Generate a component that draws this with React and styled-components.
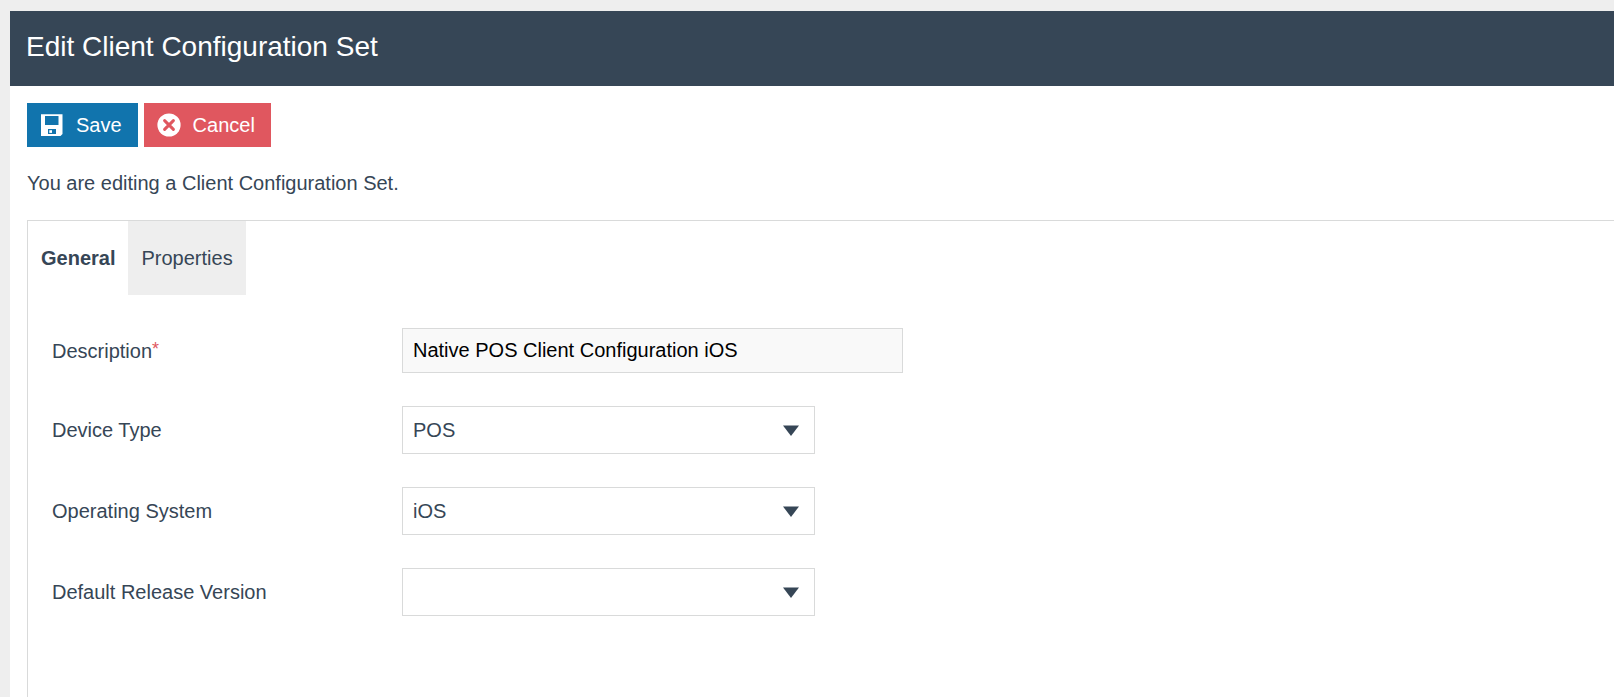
import React, { useState } from 'react';
import styled, { createGlobalStyle } from 'styled-components';

const GlobalStyle = createGlobalStyle`
  * {
    box-sizing: border-box;
  }
  body {
    margin: 0;
    background: #eeeeee;
    color: #364656;
    font-family: "Liberation Sans", Arial, sans-serif;
    font-size: 20px;
    line-height: 24px;
  }
`;

const Page = styled.div`
  display: flex;
  min-height: 100vh;
  padding: 11px 0 0 10px;
`;

const Content = styled.main`
  flex: 1;
  display: flex;
  flex-direction: column;
  background: #ffffff;
`;

const Header = styled.header`
  padding: 20px 16px 23px;
  background: #364656;
`;

const Title = styled.h1`
  margin: 0;
  color: #ffffff;
  font-size: 28px;
  font-weight: normal;
  line-height: 32px;
`;

const Body = styled.form`
  flex: 1;
  display: flex;
  flex-direction: column;
  padding: 17px 0 0 17px;
`;

const Toolbar = styled.div`
  display: flex;
  gap: 6px;
`;

const Button = styled.button`
  display: flex;
  align-items: center;
  gap: 12px;
  height: 44px;
  padding: 0 16px 0 13px;
  border: 0;
  background: ${({ $danger }) => ($danger ? '#e0575f' : '#1174ad')};
  color: #ffffff;
  font: inherit;
  cursor: pointer;
`;

const Intro = styled.p`
  margin: 24px 0 25px;
`;

const TabPanel = styled.section`
  flex: 1;
  border: solid #d9dada;
  border-width: 1px 0 0 1px;
`;

const TabList = styled.div`
  display: flex;
`;

const Tab = styled.button`
  height: 74px;
  padding: 0 13px;
  border: 0;
  background: ${({ $active }) => ($active ? '#ffffff' : '#eeeeee')};
  color: inherit;
  font: inherit;
  font-weight: ${({ $active }) => ($active ? 'bold' : 'normal')};
  cursor: pointer;
`;

const Fields = styled.div`
  display: flex;
  flex-direction: column;
  gap: 33px;
  padding: 33px 24px;
`;

const Row = styled.div`
  display: grid;
  grid-template-columns: 350px 1fr;
  align-items: center;
`;

const Required = styled.span`
  color: #e0575f;
  font-size: 18px;
  line-height: 0;
  vertical-align: 3px;
`;

const Input = styled.input`
  width: 100%;
  max-width: 501px;
  height: 45px;
  padding: 0 10px;
  border: 1px solid #d9dada;
  border-radius: 0;
  background: #f9f9f9;
  color: #000000;
  font: inherit;
`;

const SelectWrap = styled.div`
  position: relative;
  max-width: 413px;
`;

const Select = styled.select`
  display: block;
  width: 100%;
  height: 48px;
  padding: 0 40px 0 10px;
  border: 1px solid #d9dada;
  border-radius: 0;
  appearance: none;
  background: #ffffff;
  color: inherit;
  font: inherit;
`;

const Arrow = styled.svg`
  position: absolute;
  top: 19px;
  right: 16px;
  pointer-events: none;
`;

const SaveIcon = () => (
  <svg width="24" height="24" viewBox="0 0 24 24" aria-hidden="true">
    <path
      fill="#ffffff"
      fillRule="evenodd"
      d="M1 1.3h21.5V21l-2 2H1zM5 3v9h13.5V3zM8 16v5h8v-5z"
    />
    <path fill="#ffffff" d="M9.3 17.2h2.7v2.7H9.3z" />
  </svg>
);

const CancelIcon = () => (
  <svg width="24" height="24" viewBox="0 0 24 24" aria-hidden="true">
    <circle cx="12" cy="12" r="11.6" fill="#ffffff" />
    <path
      stroke="#e0575f"
      strokeWidth="3"
      strokeLinecap="round"
      d="M7.6 7.6l8.8 8.8M16.4 7.6l-8.8 8.8"
    />
  </svg>
);

const selects = [
  { id: 'deviceType', label: 'Device Type', options: ['POS'] },
  { id: 'operatingSystem', label: 'Operating System', options: ['iOS'] },
  { id: 'releaseVersion', label: 'Default Release Version', options: [''] },
];

const tabs = ['General', 'Properties'];

const App = () => {
  const [activeTab, setActiveTab] = useState('General');
  return (
    <>
      <GlobalStyle />
      <Page>
        <Content>
          <Header>
            <Title>Edit Client Configuration Set</Title>
          </Header>
          <Body onSubmit={(e) => e.preventDefault()}>
            <Toolbar>
              <Button type="submit">
                <SaveIcon />
                Save
              </Button>
              <Button type="button" $danger>
                <CancelIcon />
                Cancel
              </Button>
            </Toolbar>
            <Intro>You are editing a Client Configuration Set.</Intro>
            <TabPanel>
              <TabList role="tablist">
                {tabs.map((tab) => (
                  <Tab
                    key={tab}
                    type="button"
                    role="tab"
                    aria-selected={tab === activeTab}
                    $active={tab === activeTab}
                    onClick={() => setActiveTab(tab)}
                  >
                    {tab}
                  </Tab>
                ))}
              </TabList>
              {activeTab === 'General' && (
                <Fields>
                  <Row>
                    <label htmlFor="description">
                      Description<Required>*</Required>
                    </label>
                    <Input
                      id="description"
                      type="text"
                      required
                      defaultValue="Native POS Client Configuration iOS"
                    />
                  </Row>
                  {selects.map(({ id, label, options }) => (
                    <Row key={id}>
                      <label htmlFor={id}>{label}</label>
                      <SelectWrap>
                        <Select id={id}>
                          {options.map((option) => (
                            <option key={option}>{option}</option>
                          ))}
                        </Select>
                        <Arrow width="16" height="11" viewBox="0 0 16 11" aria-hidden="true">
                          <path fill="#364656" d="M0 .5h16L8 11z" />
                        </Arrow>
                      </SelectWrap>
                    </Row>
                  ))}
                </Fields>
              )}
            </TabPanel>
          </Body>
        </Content>
      </Page>
    </>
  );
};

export default App;
